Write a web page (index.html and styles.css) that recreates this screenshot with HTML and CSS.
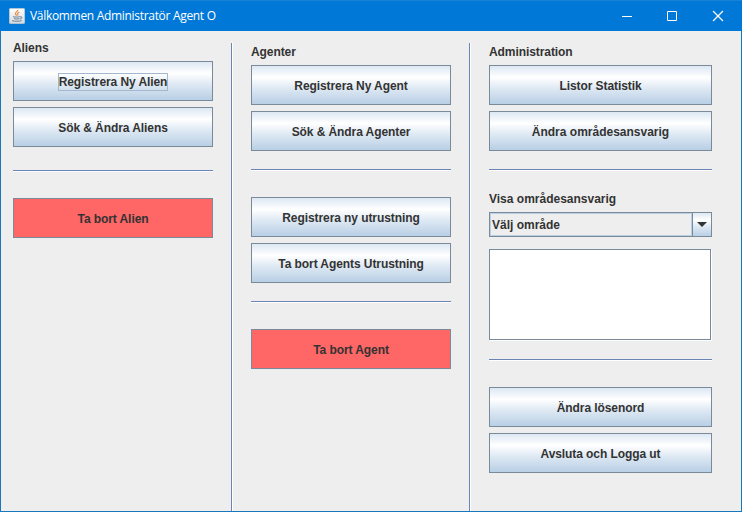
FILE: index.html
```html
<!DOCTYPE html>
<html lang="sv">
<head>
<meta charset="utf-8">
<title>Välkommen Administratör Agent O</title>
<link rel="stylesheet" href="styles.css">
</head>
<body>
<div class="window">
  <header class="titlebar">
    <svg class="app-icon" width="16" height="16" viewBox="0 0 16 16">
      <defs><linearGradient id="tile" x1="0" y1="0" x2="0" y2="1"><stop offset="0" stop-color="#fff"/><stop offset="1" stop-color="#d5d8da"/></linearGradient></defs>
      <rect x=".4" y=".4" width="15.2" height="15.2" rx="1" fill="url(#tile)" stroke="#c3cdd4" stroke-width=".8"/>
      <path d="M8.800 1.800c.8 1.700-3.400 2.600-2.400 4.200.3.600.9.900 1.200 1.500M10.400 4.200c-1.500.6-2.400 1.200-1.700 2.200.4.500.2.800-.2 1.200" fill="none" stroke="#e8863c" stroke-width="1.100"/>
      <path d="M4 8.700c1.800.5 5 .5 6.800 0M5 10.600c1.500.5 4 .5 5.500 0M3.200 12.700c2.500.8 7 .7 9.300-.1M11 8.900c2.600-.7 2.500 1.700.1 2.200" fill="none" stroke="#627f96" stroke-width="1"/>
    </svg>
    <h1 class="title">Välkommen Administratör Agent O</h1>
    <div class="controls">
      <svg width="46" height="30" viewBox="0 0 46 30"><path d="M17 15.500h10"/></svg>
      <svg width="45" height="30" viewBox="0 0 45 30"><path d="M16.500 10.500h9v9h-9z"/></svg>
      <svg width="46" height="30" viewBox="0 0 46 30"><path class="close" d="M17.500 10.500l9 9M26.500 10.500l-9 9"/></svg>
    </div>
  </header>
  <main class="content">
    <section class="column column-aliens">
      <h2>Aliens</h2>
      <button class="btn"><span class="focus">Registrera Ny Alien</span></button>
      <button class="btn">Sök &amp; Ändra Aliens</button>
      <div class="rule"></div>
      <button class="btn danger">Ta bort Alien</button>
    </section>
    <div class="divider"></div>
    <section class="column">
      <h2>Agenter</h2>
      <button class="btn">Registrera Ny Agent</button>
      <button class="btn">Sök &amp; Ändra Agenter</button>
      <div class="rule"></div>
      <button class="btn">Registrera ny utrustning</button>
      <button class="btn">Ta bort Agents Utrustning</button>
      <div class="rule"></div>
      <button class="btn danger">Ta bort Agent</button>
    </section>
    <div class="divider"></div>
    <section class="column">
      <h2>Administration</h2>
      <button class="btn">Listor Statistik</button>
      <button class="btn wide">Ändra områdesansvarig</button>
      <div class="rule rule-tight"></div>
      <h2 class="wide">Visa områdesansvarig</h2>
      <div class="combo">
        <span class="combo-value wide">Välj område</span>
        <span class="combo-arrow"><svg width="10" height="5" viewBox="0 0 10 5"><path d="M0 0h10L5 5z"/></svg></span>
      </div>
      <div class="textbox"></div>
      <div class="rule rule-after-box"></div>
      <button class="btn">Ändra lösenord</button>
      <button class="btn">Avsluta och Logga ut</button>
    </section>
  </main>
</div>
</body>
</html>
```
FILE: styles.css
```css
* { box-sizing: border-box; }

body {
  margin: 0;
  font: bold 12px/16px "Liberation Sans", Arial, sans-serif;
  letter-spacing: -0.08px;
  color: #333;
}

.window {
  width: 742px;
  height: 512px;
  display: flex;
  flex-direction: column;
  background: #eee;
  border: 1px solid #1878bd;
  border-top: 0;
}

.titlebar {
  height: 31px;
  flex: none;
  display: flex;
  align-items: center;
  margin: 0 -1px;
  padding-left: 9px;
  background: #0078d7;
  border-top: 1px solid #1683d8;
}

.app-icon { margin-right: 5px; }

.title {
  margin: 0;
  font: 400 12px/16px "Open Sans", "Noto Sans", sans-serif;
  letter-spacing: -0.31px;
  color: #fff;
  white-space: nowrap;
}

.controls { display: flex; margin-left: auto; }
.controls svg { fill: none; stroke: #fff; stroke-width: 1; }
.controls .close { stroke-width: 1.3; stroke-linecap: square; }

.content {
  flex: 1;
  display: grid;
  grid-template-columns: 200px 2px 200px 2px 223px;
  column-gap: 18px;
  padding: 12px 0 0 12px;
}

.divider {
  background: linear-gradient(90deg, #6a84b4 50%, #fff 50%);
}

.column {
  display: flex;
  flex-direction: column;
  padding-top: 1px;
}

.column-aliens { padding-top: 0; }
.column-aliens h2 { margin: -3px 0 5px; }
.column-aliens .rule { margin: 17px 0 26px; }

h2 {
  margin: 0 0 5px;
  font: inherit;
  line-height: 16px;
}

.btn {
  height: 40px;
  flex: none;
  padding: 1px 0 0;
  margin-bottom: 6px;
  border: 1px solid #7a8a99;
  border-radius: 0;
  background: linear-gradient(#dde8f3 0%, #fff 30%, #dde8f3 60%, #b8cfe5 100%);
  font: inherit;
  letter-spacing: inherit;
  color: #333;
}

.wide { letter-spacing: 0; }

.focus {
  display: inline-block;
  border: 1px solid #a3b8cc;
}

.danger { background: #f66; }

.rule {
  height: 2px;
  flex: none;
  margin: 12px 0 26px;
  background: linear-gradient(#6a84b4 50%, #fff 50%);
}

.rule-tight { margin-bottom: 20px; }
.rule-after-box { margin-top: 19px; }

.combo {
  height: 25px;
  flex: none;
  display: flex;
  margin-bottom: 12px;
  border: 1px solid #7a8a99;
}

.combo-value {
  flex: 1;
  padding: 3px 0 0 1px;
  border: 1px solid #b8cfe5;
}

.combo-arrow {
  width: 19px;
  display: flex;
  align-items: center;
  justify-content: center;
  border-left: 1px solid #7a8a99;
  background: linear-gradient(#dde8f3 0%, #fff 30%, #dde8f3 60%, #b8cfe5 100%);
}

.combo-arrow svg { fill: #333; }

.textbox {
  height: 91px;
  flex: none;
  width: 222px;
  border: 1px solid #7a8a99;
  background: #fff;
  box-shadow: 1px 1px 0 #fff;
}
```
